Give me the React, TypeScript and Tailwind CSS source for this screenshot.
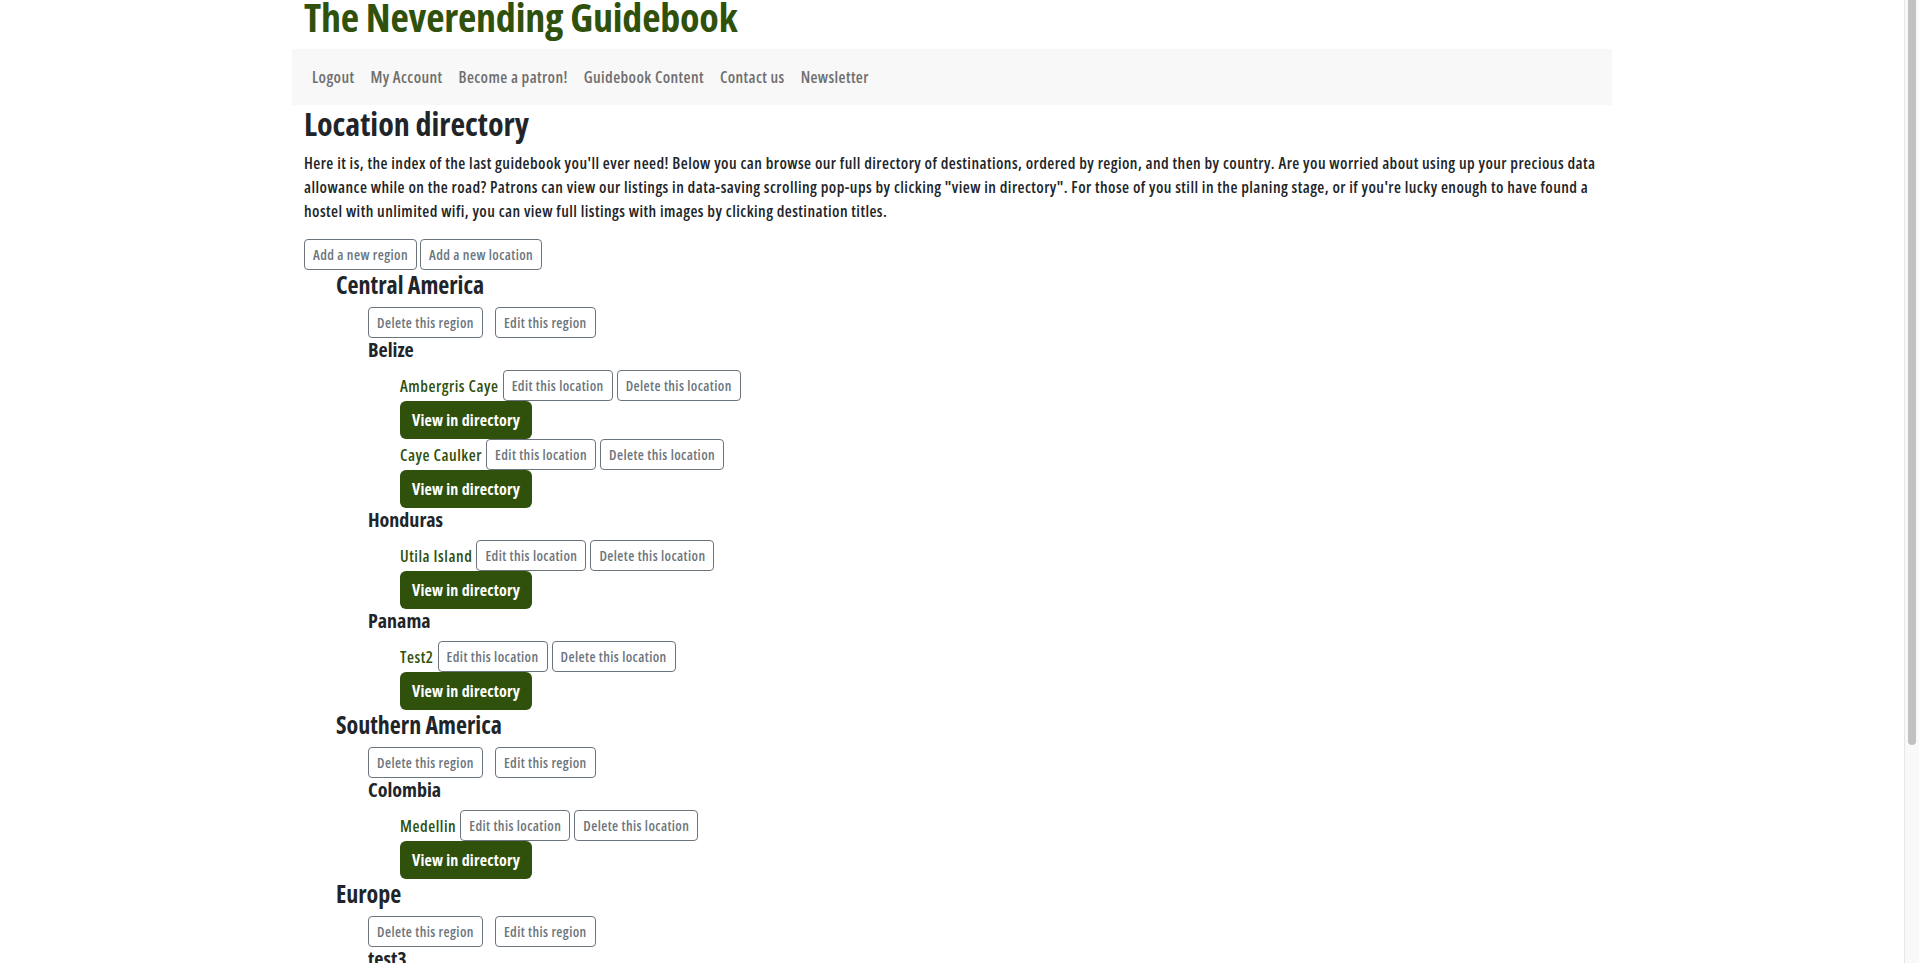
import React from "react";

const FONT = "[font-family:'Open_Sans',sans-serif] [font-stretch:75%]";

function OutlineBtn({ children }: { children: React.ReactNode }) {
  return (
    <button className="inline-flex items-center h-[31px] px-2 border border-[#6c757d] rounded-[4px] text-[14px] leading-[21px] font-semibold tracking-[0.4px] text-[#6c757d] bg-white whitespace-nowrap">
      {children}
    </button>
  );
}

function ViewBtn() {
  return (
    <div>
      <button className="inline-flex items-center h-[38px] px-3 rounded-[6px] bg-[#2f510c] text-white text-[16px] leading-6 font-bold tracking-[0.2px] whitespace-nowrap">
        View in directory
      </button>
    </div>
  );
}

function Location({ name }: { name: string }) {
  return (
    <li>
      <div className="flex items-center gap-[4px] h-[31px]">
        <a className="text-[16px] font-semibold tracking-[0.55px] text-[#2f510c] leading-6 cursor-pointer">{name}</a>
        <OutlineBtn>Edit this location</OutlineBtn>
        <OutlineBtn>Delete this location</OutlineBtn>
      </div>
      <ViewBtn />
    </li>
  );
}

function Country({ name, locations }: { name: string; locations: string[] }) {
  return (
    <li>
      <h5 className="text-[20px] leading-[24px] mb-2 font-bold text-[#212529]">{name}</h5>
      <ul className="pl-8">
        {locations.map((l) => (
          <Location key={l} name={l} />
        ))}
      </ul>
    </li>
  );
}

function Region({ name, countries }: { name: string; countries: { name: string; locations: string[] }[] }) {
  return (
    <li>
      <h4 className="text-[24px] leading-[29px] mb-2 font-bold text-[#212529]">{name}</h4>
      <ul className="pl-8">
        <li className="flex gap-3 h-[31px]">
          <OutlineBtn>Delete this region</OutlineBtn>
          <OutlineBtn>Edit this region</OutlineBtn>
        </li>
        {countries.map((c) => (
          <Country key={c.name} name={c.name} locations={c.locations} />
        ))}
      </ul>
    </li>
  );
}

const DATA = [
  {
    name: "Central America",
    countries: [
      { name: "Belize", locations: ["Ambergris Caye", "Caye Caulker"] },
      { name: "Honduras", locations: ["Utila Island"] },
      { name: "Panama", locations: ["Test2"] },
    ],
  },
  {
    name: "Southern America",
    countries: [{ name: "Colombia", locations: ["Medellin"] }],
  },
  {
    name: "Europe",
    countries: [{ name: "test3", locations: ["Test3"] }],
  },
];

function FakeScrollbar() {
  return (
    <div className="fixed right-0 top-0 h-screen w-[15px] bg-[#f9f9f9] border-l border-[#e6e6e6]">
      <div className="absolute left-[3px] top-0 w-[8px] h-[745px] bg-[#c1c1c1] rounded-b-[4px]" />
    </div>
  );
}

export default function App() {
  return (
    <div className={`min-h-screen bg-white text-[#212529] pr-[15px] ${FONT}`}>
      <div className="mx-auto w-[1320px] px-3 pb-[205px]">
        <h1 className="text-[40px] leading-[48px] mb-2 -mt-[7px] font-bold tracking-[-0.2px] text-[#2f510c] whitespace-nowrap">
          The Neverending Guidebook
        </h1>
        <nav className="-mx-3 px-3 py-2 bg-[#f8f8f8]">
          <ul className="flex">
            {["Logout", "My Account", "Become a patron!", "Guidebook Content", "Contact us", "Newsletter"].map((t) => (
              <li key={t}>
                <a className="block px-2 py-2 text-[16px] leading-6 font-semibold tracking-[0.4px] text-[#6f6f6f] cursor-pointer whitespace-nowrap">{t}</a>
              </li>
            ))}
          </ul>
        </nav>
        <h2 className="text-[32px] leading-[38px] mb-2 font-bold text-[#212529] whitespace-nowrap">Location directory</h2>
        <p className="text-[16px] leading-6 mb-4 font-semibold tracking-[0.45px] text-[#212529]">
          <span className="whitespace-nowrap">
            Here it is, the index of the last guidebook you'll ever need! Below you can browse our full directory of destinations, ordered by region, and then by country. Are you worried about using up your precious data
          </span>
          <br />
          <span className="whitespace-nowrap">
            allowance while on the road? Patrons can view our listings in data-saving scrolling pop-ups by clicking "view in directory". For those of you still in the planing stage, or if you're lucky enough to have found a
          </span>
          <br />
          <span className="whitespace-nowrap">
            hostel with unlimited wifi, you can view full listings with images by clicking destination titles.
          </span>
        </p>
        <div className="flex gap-[3px]">
          <OutlineBtn>Add a new region</OutlineBtn>
          <OutlineBtn>Add a new location</OutlineBtn>
        </div>
        <ul className="pl-8">
          {DATA.map((r) => (
            <Region key={r.name} name={r.name} countries={r.countries} />
          ))}
        </ul>
      </div>
      <FakeScrollbar />
    </div>
  );
}
